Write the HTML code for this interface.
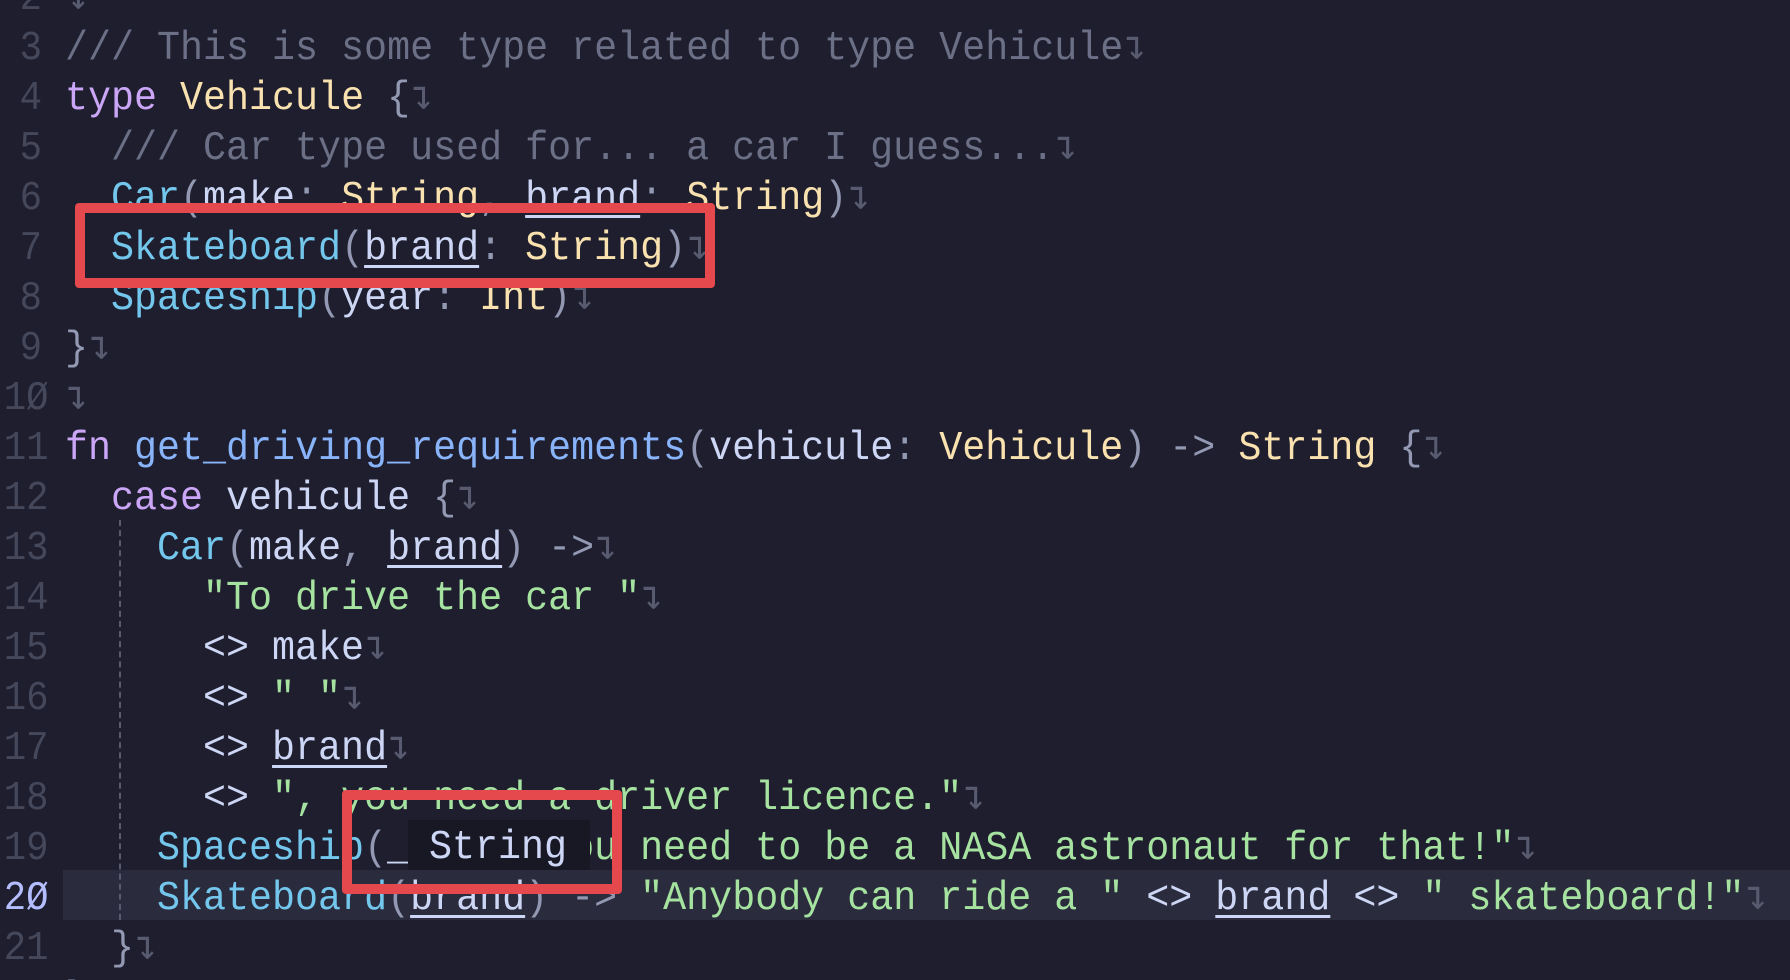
<!DOCTYPE html>
<html><head><meta charset="utf-8"><style>
html,body{margin:0;padding:0;background:#1e1e2e;width:1790px;height:980px;overflow:hidden;position:relative;font-family:"Liberation Mono","DejaVu Sans Mono",monospace;}
.ln{position:absolute;left:0;width:42px;text-align:right;font-size:41px;line-height:50px;color:#45475a;transform:scaleX(0.91);transform-origin:right center;margin-top:3px;}
.l{position:absolute;left:65px;height:50px;font-size:41px;line-height:50px;color:#cdd6f4;white-space:pre;transform:scaleX(0.935);transform-origin:left center;margin-top:3px;}
.c{color:#6c7086}.k{color:#cba6f7}.t{color:#f9e2af}.s{color:#74c7ec}.p{color:#9399b2}.g{color:#a6e3a1}.f{color:#89b4fa}.n{color:#585b70}
u{text-decoration:underline;text-decoration-thickness:3px;text-underline-offset:6px;}
.box{position:absolute;border:10px solid #e5484d;border-radius:4px;}
</style></head><body>
<div style="position:absolute;left:63px;top:870px;width:1727px;height:50px;background:#2a2b3c"></div>
<div style="position:absolute;left:119px;top:520px;height:400px;border-left:2px dashed #585b70"></div>

<div class="ln" style="top:-29px">2</div><div class="l" style="top:-29px"><span class="n">↴</span></div>
<div class="ln" style="top:21px">3</div><div class="l" style="top:21px"><span class="c">/// This is some type related to type Vehicule</span><span class="n">↴</span></div>
<div class="ln" style="top:71px">4</div><div class="l" style="top:71px"><span class="k">type</span> <span class="t">Vehicule</span> <span class="p">{</span><span class="n">↴</span></div>
<div class="ln" style="top:121px">5</div><div class="l" style="top:121px">  <span class="c">/// Car type used for... a car I guess...</span><span class="n">↴</span></div>
<div class="ln" style="top:171px">6</div><div class="l" style="top:171px">  <span class="s">Car</span><span class="p">(</span>make<span class="p">:</span> <span class="t">String</span><span class="p">,</span> <u>brand</u><span class="p">:</span> <span class="t">String</span><span class="p">)</span><span class="n">↴</span></div>
<div class="ln" style="top:221px">7</div><div class="l" style="top:221px">  <span class="s">Skateboard</span><span class="p">(</span><u>brand</u><span class="p">:</span> <span class="t">String</span><span class="p">)</span><span class="n">↴</span></div>
<div class="ln" style="top:271px">8</div><div class="l" style="top:271px">  <span class="s">Spaceship</span><span class="p">(</span>year<span class="p">:</span> <span class="t">Int</span><span class="p">)</span><span class="n">↴</span></div>
<div class="ln" style="top:321px">9</div><div class="l" style="top:321px"><span class="p">}</span><span class="n">↴</span></div>
<div class="ln" style="top:371px">1Ø</div><div class="l" style="top:371px"><span class="n">↴</span></div>
<div class="ln" style="top:421px">11</div><div class="l" style="top:421px"><span class="k">fn</span> <span class="f">get_driving_requirements</span><span class="p">(</span>vehicule<span class="p">:</span> <span class="t">Vehicule</span><span class="p">)</span> <span class="p">-&gt;</span> <span class="t">String</span> <span class="p">{</span><span class="n">↴</span></div>
<div class="ln" style="top:471px">12</div><div class="l" style="top:471px">  <span class="k">case</span> vehicule <span class="p">{</span><span class="n">↴</span></div>
<div class="ln" style="top:521px">13</div><div class="l" style="top:521px">    <span class="s">Car</span><span class="p">(</span>make<span class="p">,</span> <u>brand</u><span class="p">)</span> <span class="p">-&gt;</span><span class="n">↴</span></div>
<div class="ln" style="top:571px">14</div><div class="l" style="top:571px">      <span class="g">"To drive the car "</span><span class="n">↴</span></div>
<div class="ln" style="top:621px">15</div><div class="l" style="top:621px">      &lt;&gt; make<span class="n">↴</span></div>
<div class="ln" style="top:671px">16</div><div class="l" style="top:671px">      &lt;&gt; <span class="g">" "</span><span class="n">↴</span></div>
<div class="ln" style="top:721px">17</div><div class="l" style="top:721px">      &lt;&gt; <u>brand</u><span class="n">↴</span></div>
<div class="ln" style="top:771px">18</div><div class="l" style="top:771px">      &lt;&gt; <span class="g">", you need a driver licence."</span><span class="n">↴</span></div>
<div class="ln" style="top:821px">19</div><div class="l" style="top:821px">    <span class="s">Spaceship</span><span class="p">(</span>_<span class="p">)</span> <span class="p">-&gt;</span> <span class="g">"You need to be a NASA astronaut for that!"</span><span class="n">↴</span></div>
<div class="ln" style="top:871px;color:#b4befe">2Ø</div><div class="l" style="top:871px">    <span class="s">Skateboard</span><span class="p">(</span><u>brand</u><span class="p">)</span> <span class="p">-&gt;</span> <span class="g">"Anybody can ride a "</span> &lt;&gt; <u>brand</u> &lt;&gt; <span class="g">" skateboard!"</span><span class="n">↴</span></div>
<div class="ln" style="top:921px">21</div><div class="l" style="top:921px">  <span class="p">}</span><span class="n">↴</span></div>
<div class="ln" style="top:971px">22</div><div class="l" style="top:971px"><span class="p">}</span></div>

<div style="position:absolute;left:408px;top:820px;width:182px;height:50px;background:#181825"></div>
<div class="l" style="top:820px;left:429px;color:#cdd6f4">String</div>

<div class="box" style="left:75px;top:203px;width:620px;height:65px"></div>
<div class="box" style="left:342px;top:790px;width:260px;height:84px"></div>
</body></html>
